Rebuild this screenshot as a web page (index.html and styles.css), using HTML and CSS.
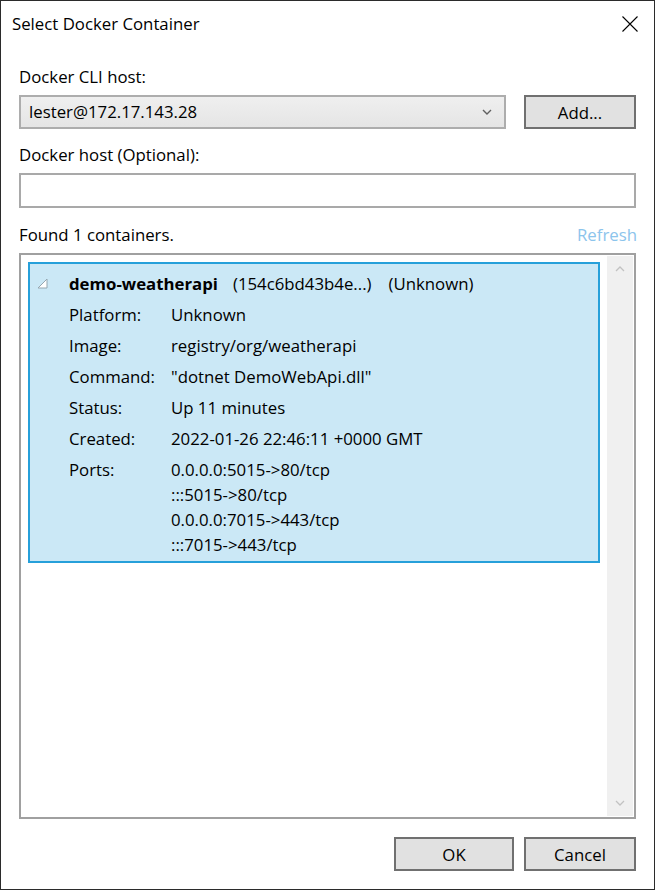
FILE: index.html
```html
<!DOCTYPE html>
<html>
<head>
<meta charset="utf-8">
<link rel="stylesheet" href="styles.css">
</head>
<body>
<div class="window">
  <div class="titlebar">
    <span class="title">Select Docker Container</span>
    <svg class="close" width="16" height="16" viewBox="0 0 16 16"><path d="M0.5 0.5 L15.5 15.5 M15.5 0.5 L0.5 15.5" stroke="#000" stroke-width="1.1" fill="none"/></svg>
  </div>
  <div class="content">
    <div class="label first">Docker CLI host:</div>
    <div class="host-row">
      <div class="combo">
        <span class="combo-text">lester@172.17.143.28</span>
        <svg class="chev" width="10" height="6" viewBox="0 0 10 6"><path d="M1 1 L5 5 L9 1" stroke="#606060" stroke-width="1.4" fill="none"/></svg>
      </div>
      <div class="btn add">Add...</div>
    </div>
    <div class="label second">Docker host (Optional):</div>
    <div class="textbox"></div>
    <div class="found-row">
      <span>Found 1 containers.</span>
      <span class="refresh">Refresh</span>
    </div>
    <div class="listbox">
      <div class="list-area">
        <div class="item">
          <div class="name-row">
            <svg class="expander" width="11" height="11" viewBox="0 0 11 11"><path d="M10 1 L10 10 L1 10 Z" fill="#ffffff" stroke="#95a6b0" stroke-width="1" stroke-linejoin="round"/></svg>
            <span class="name">demo-weatherapi</span>
            <span class="id">(154c6bd43b4e...)</span>
            <span class="state">(Unknown)</span>
          </div>
          <div class="prop"><span class="key">Platform:</span><span class="val">Unknown</span></div>
          <div class="prop"><span class="key">Image:</span><span class="val">registry/org/weatherapi</span></div>
          <div class="prop"><span class="key">Command:</span><span class="val">"dotnet DemoWebApi.dll"</span></div>
          <div class="prop"><span class="key">Status:</span><span class="val">Up 11 minutes</span></div>
          <div class="prop"><span class="key">Created:</span><span class="val">2022-01-26 22:46:11 +0000 GMT</span></div>
          <div class="prop"><span class="key">Ports:</span><span class="val">0.0.0.0:5015-&gt;80/tcp<br>:::5015-&gt;80/tcp<br>0.0.0.0:7015-&gt;443/tcp<br>:::7015-&gt;443/tcp</span></div>
        </div>
      </div>
      <div class="scrollbar">
        <svg width="10" height="6" viewBox="0 0 10 6"><path d="M1 5 L5 1 L9 5" stroke="#c2c2c2" stroke-width="1.3" fill="none"/></svg>
        <svg width="10" height="6" viewBox="0 0 10 6"><path d="M1 1 L5 5 L9 1" stroke="#c2c2c2" stroke-width="1.3" fill="none"/></svg>
      </div>
    </div>
    <div class="buttons">
      <div class="btn ok">OK</div>
      <div class="btn cancel">Cancel</div>
    </div>
  </div>
</div>
</body>
</html>
```

FILE: styles.css
```css
html, body {
  margin: 0;
  padding: 0;
  background: #ffffff;
}

.window {
  width: 655px;
  height: 890px;
  box-sizing: border-box;
  border: 1px solid #2b2b2b;
  background: #ffffff;
  font-family: "Segoe UI", "Open Sans", sans-serif;
  font-size: 16.8px;
  color: #000000;
  display: flex;
  flex-direction: column;
}

.titlebar {
  height: 45px;
  flex: none;
  display: flex;
  align-items: center;
  justify-content: space-between;
  padding: 0 16px 0 11px;
}

.title {
  line-height: 22px;
}

.close {
  display: block;
}

.content {
  padding: 0 18px;
  display: flex;
  flex-direction: column;
}

.label {
  line-height: 22px;
  height: 22px;
}

.label.first {
  margin-top: 20px;
}

.label.second {
  margin-top: 15px;
}

.host-row {
  margin-top: 7px;
  display: flex;
  gap: 18px;
  height: 34px;
}

.combo {
  flex: 1;
  box-sizing: border-box;
  border: 2px solid #adadad;
  background: linear-gradient(#efefef, #e5e5e5);
  display: flex;
  align-items: center;
  justify-content: space-between;
  padding: 0 12px 0 8px;
}

.combo-text {
  margin-top: -1px;
}

.chev {
  display: block;
}

.btn {
  box-sizing: border-box;
  border: 2px solid #707070;
  background: #e1e1e1;
  display: flex;
  align-items: center;
  justify-content: center;
  height: 34px;
}

.add {
  width: 112px;
}

.textbox {
  margin-top: 7px;
  height: 35px;
  box-sizing: border-box;
  border: 2px solid #a9a9a9;
  background: #ffffff;
}

.found-row {
  margin-top: 16px;
  height: 22px;
  line-height: 22px;
  display: flex;
  justify-content: space-between;
}

.refresh {
  color: #8cc4ec;
  margin-right: -1px;
}

.listbox {
  margin-top: 7px;
  height: 566px;
  box-sizing: border-box;
  border: 2px solid #a0a0a0;
  padding: 1px;
  display: flex;
}

.list-area {
  flex: 1;
  padding: 6px 7px 0 6px;
}

.item {
  box-sizing: border-box;
  border: 2px solid #26a0da;
  background: #cbe8f6;
  padding: 7px 0 4px 0;
  line-height: 25px;
}

.name-row {
  display: flex;
  align-items: center;
  height: 25px;
}

.expander {
  display: block;
  margin-left: 7px;
  margin-right: 21px;
  margin-top: 0;
}

.name {
  font-weight: bold;
  margin-right: 15px;
}

.id {
  margin-right: 17px;
}

.prop {
  display: flex;
  margin-top: 6px;
  padding-left: 39px;
}

.key {
  width: 102px;
  flex: none;
}

.scrollbar {
  width: 26px;
  flex: none;
  background: #f0f0f0;
  display: flex;
  flex-direction: column;
  align-items: center;
  justify-content: space-between;
  padding: 10px 0 10px 0;
  box-sizing: border-box;
}

.scrollbar svg {
  display: block;
}

.buttons {
  margin-top: 18px;
  display: flex;
  justify-content: flex-end;
  gap: 10px;
}

.ok {
  width: 120px;
}

.cancel {
  width: 112px;
}
```
